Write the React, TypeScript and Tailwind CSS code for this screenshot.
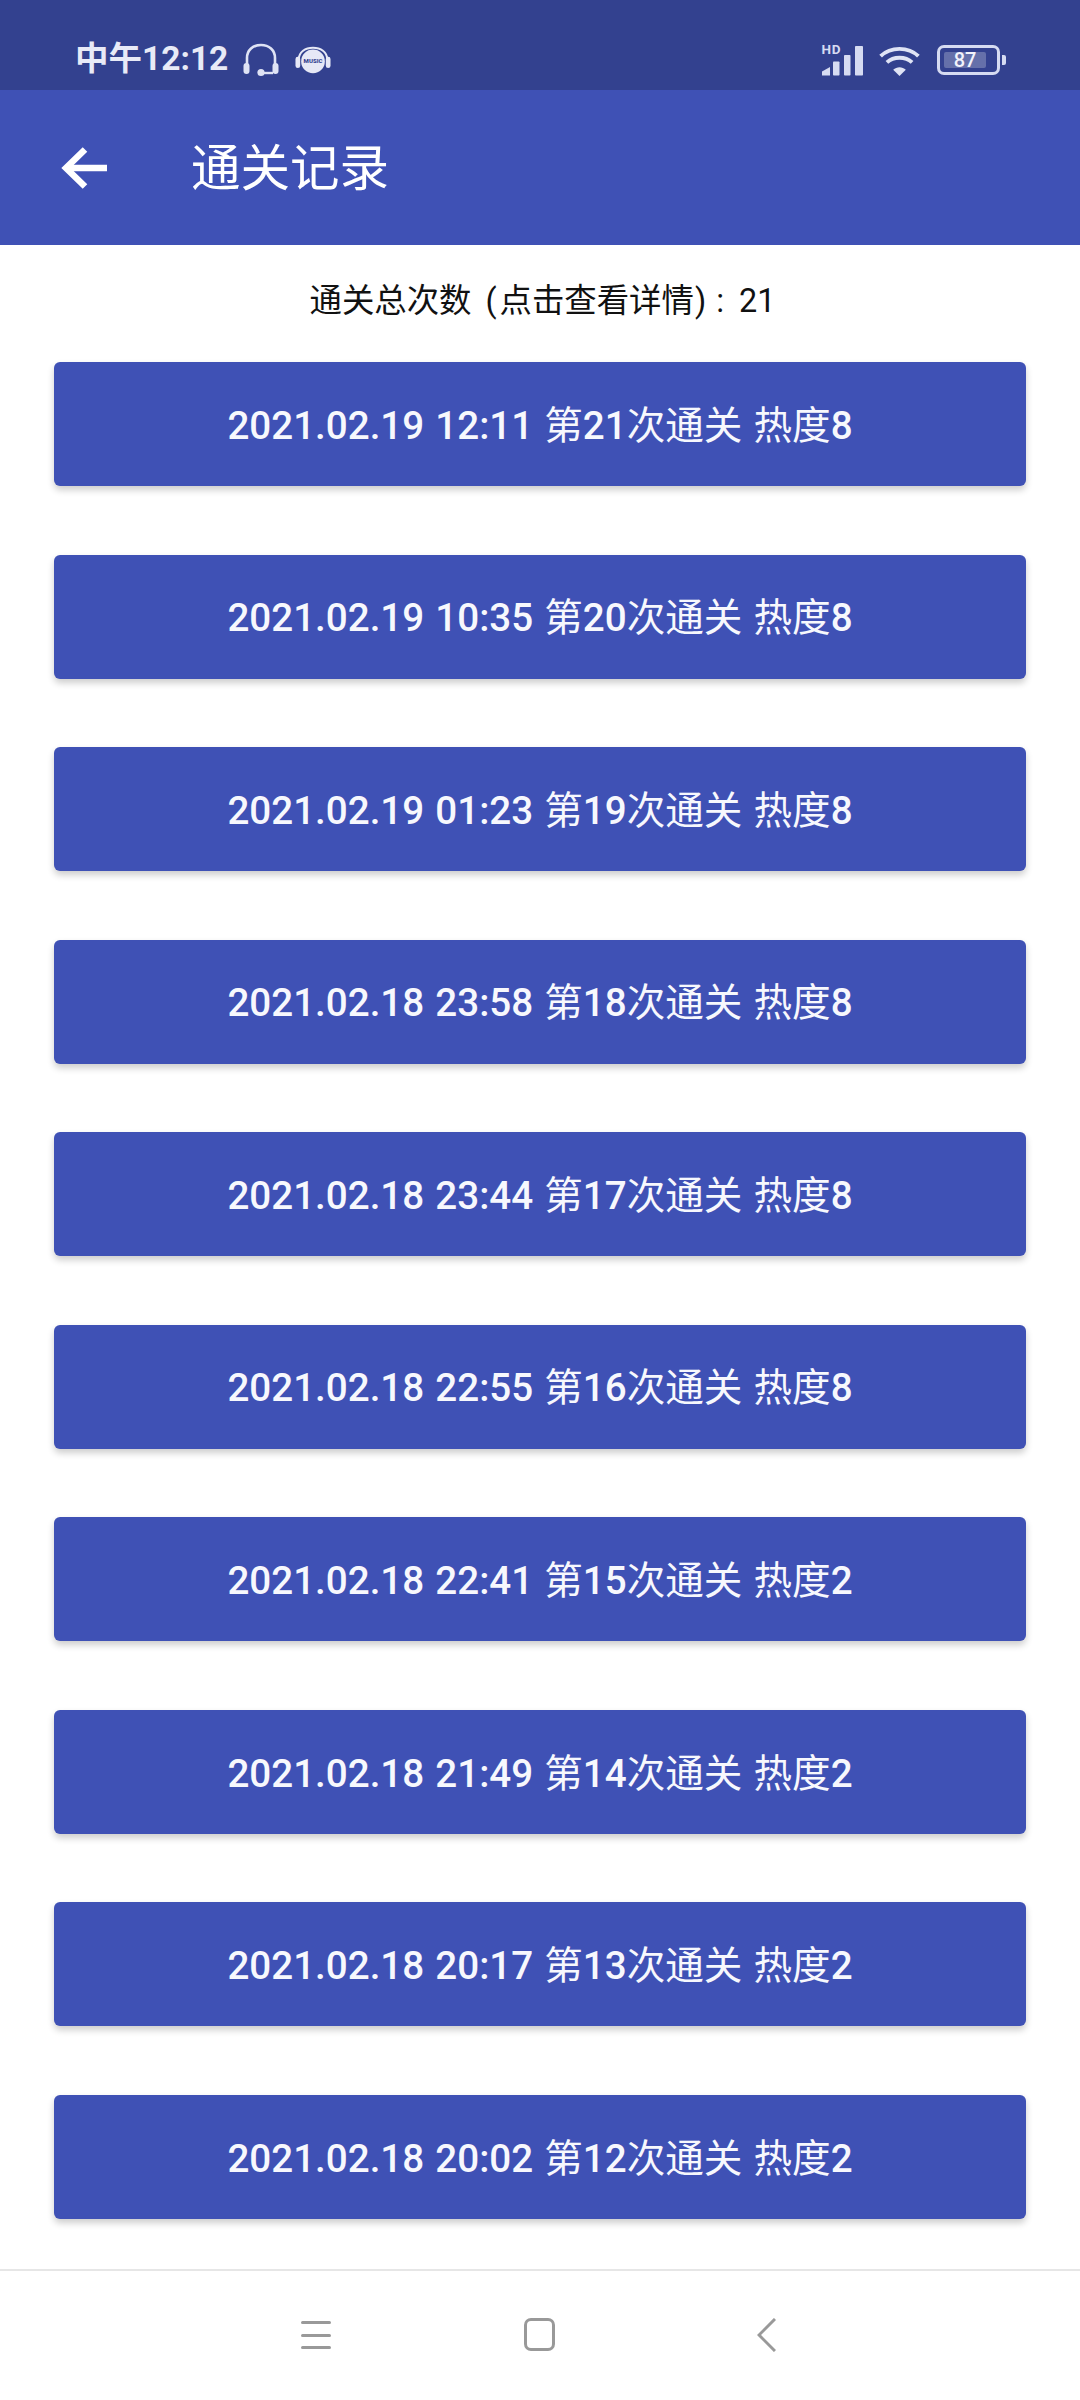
const rows = [
  ["2021.02.19 12:11", "21", "8"],
  ["2021.02.19 10:35", "20", "8"],
  ["2021.02.19 01:23", "19", "8"],
  ["2021.02.18 23:58", "18", "8"],
  ["2021.02.18 23:44", "17", "8"],
  ["2021.02.18 22:55", "16", "8"],
  ["2021.02.18 22:41", "15", "2"],
  ["2021.02.18 21:49", "14", "2"],
  ["2021.02.18 20:17", "13", "2"],
  ["2021.02.18 20:02", "12", "2"],
];

const font = "font-['Roboto','Noto_Sans_CJK_SC',sans-serif]";

function Headset() {
  return (
    <svg width="36" height="34" viewBox="0 0 36 34" fill="none">
      <path d="M4 21V15C4 7 10 2 18 2C26 2 32 7 32 15V21" stroke="#dfe3f5" strokeWidth="2.6" />
      <rect x="0.5" y="20" width="6" height="11" rx="3" fill="#dfe3f5" />
      <rect x="29.5" y="20" width="6" height="11" rx="3" fill="#dfe3f5" />
      <path d="M18 30H30" stroke="#dfe3f5" strokeWidth="2.4" />
      <circle cx="18" cy="29.5" r="3.6" fill="#dfe3f5" />
    </svg>
  );
}

function MusicHead() {
  return (
    <svg width="36" height="29" viewBox="0 0 38 30" fill="none">
      <path d="M4 18V14C4 6 11 1.5 19 1.5C27 1.5 34 6 34 14V18" stroke="#e6e8f6" strokeWidth="2.2" />
      <circle cx="19" cy="16" r="12.5" fill="#e6e8f6" />
      <rect x="0.5" y="11" width="5" height="12" rx="2.5" fill="#e6e8f6" />
      <rect x="32.5" y="11" width="5" height="12" rx="2.5" fill="#e6e8f6" />
      <text x="19" y="18" textAnchor="middle" fontSize="6.4" fontWeight="800" fill="#33418f" fontFamily="Roboto, sans-serif">MUSIC</text>
    </svg>
  );
}

function Signal() {
  return (
    <svg width="43" height="40" viewBox="0 -9 43 40" fill="#d6dbf2" className="mt-[-9px]">
      <path d="M1 30.5V26.5L9 22V30.5Z" />
      <rect x="12" y="16.5" width="6.5" height="14" rx="0.8" />
      <rect x="23" y="10" width="6.5" height="20.5" rx="0.8" />
      <rect x="34" y="1" width="8" height="29.5" rx="0.8" />
      <text x="0.5" y="9" fontSize="13.5" fontWeight="700" fill="#d6dbf2" fontFamily="Roboto, sans-serif" letterSpacing="0.6">HD</text>
    </svg>
  );
}

function Wifi() {
  return (
    <svg width="43" height="31" viewBox="0 0 44 32" fill="none" stroke="#dfe3f5" strokeWidth="4">
      <path d="M2.5 11.5C13 1.5 31 1.5 41.5 11.5" />
      <path d="M9 18C16 11.5 28 11.5 35 18" />
      <path d="M22 32L15.5 25.5C19 22 25 22 28.5 25.5Z" fill="#dfe3f5" stroke="none" />
    </svg>
  );
}

function Battery() {
  return (
    <div className="flex items-center gap-[2px]">
      <div className="w-[63px] h-[30px] rounded-[7px] border-[3px] border-[#d6dbf2] flex items-center justify-start pl-[4px]">
        <div className="w-[42px] h-[16px] rounded-[2px] bg-[#6570aa] flex items-center justify-center text-[20px] font-medium leading-none text-[#f2f3fb]">87</div>
      </div>
      <div className="w-[4px] h-[10px] rounded-r-[2px] bg-[#d6dbf2]" />
    </div>
  );
}

export default function App() {
  return (
    <div className={`w-[1080px] h-[2400px] bg-white flex flex-col overflow-hidden ${font}`}>
      <div className="h-[90px] shrink-0 bg-[#33418f] flex items-start justify-between pl-[75px] pr-[74px] pt-[41px]">
        <div className="flex items-center h-[36px]">
          <span className="text-[33.5px] font-bold leading-none text-[#e8eaf7]">中午12:12</span>
          <div className="ml-[15px] mt-[2px] flex"><Headset /></div>
          <div className="ml-[16px] mt-[2px] flex"><MusicHead /></div>
        </div>
        <div className="flex items-center h-[36px] mt-[1px]">
          <Signal />
          <div className="ml-[14px] flex"><Wifi /></div>
          <div className="ml-[16px] flex"><Battery /></div>
        </div>
      </div>

      <div className="h-[155px] shrink-0 bg-[#3f51b5] flex items-center pl-[61px]">
        <svg width="46" height="42" viewBox="0 0 46 42" fill="none" stroke="#ffffff" strokeWidth="6.5">
          <path d="M46 21H5" />
          <path d="M24 2.5L5 21L24 39.5" />
        </svg>
        <span className="ml-[84px] mt-[5px] text-[49.5px] leading-none text-white">通关记录</span>
      </div>

      <div className="flex-1 bg-white">
        <div className="h-[117px] flex items-start justify-center pt-[34px] pl-[5px] text-[32.4px] leading-[44px] text-[#111111] whitespace-pre">
          通关总次数<span className="ml-[14px]">(</span><span className="ml-[3px]">点击查看详情</span><span className="ml-[1px]">)</span><span className="ml-[10px]">:</span><span className="ml-[15px]">21</span>
        </div>
        <div className="flex flex-col gap-[68.55px] px-[54px]">
          {rows.map(([d, n, h]) => (
            <div
              key={d}
              className="h-[124px] rounded-[6px] bg-[#3f51b5] shadow-[0_4px_7px_rgba(0,0,0,0.2)] flex items-center justify-center text-[38.6px] font-medium leading-none text-[#f7f8fd] [word-spacing:1.5px]"
            >
              <div className="mt-[4px]">
                {d} <span className="font-normal">第</span>{n}<span className="font-normal">次通关 热度</span>{h}
              </div>
            </div>
          ))}
        </div>
      </div>

      <div className="h-[131px] shrink-0 bg-white border-t-[2px] border-[#e6e6e6] flex items-start justify-center pt-[47px] pr-[3px]">
        <div className="w-[30px] flex flex-col gap-[9.5px] mt-[3px] mr-[193px]">
          <div className="h-[3px] bg-[#999999] rounded-full" />
          <div className="h-[3px] bg-[#999999] rounded-full" />
          <div className="h-[3px] bg-[#999999] rounded-full" />
        </div>
        <div className="w-[31px] h-[33px] rounded-[7px] border-[3px] border-[#999999]" />
        <svg width="19" height="34" viewBox="0 0 19 34" fill="none" stroke="#999999" strokeWidth="3" className="ml-[202px]">
          <path d="M18 1L2 17L18 33" />
        </svg>
      </div>
    </div>
  );
}
